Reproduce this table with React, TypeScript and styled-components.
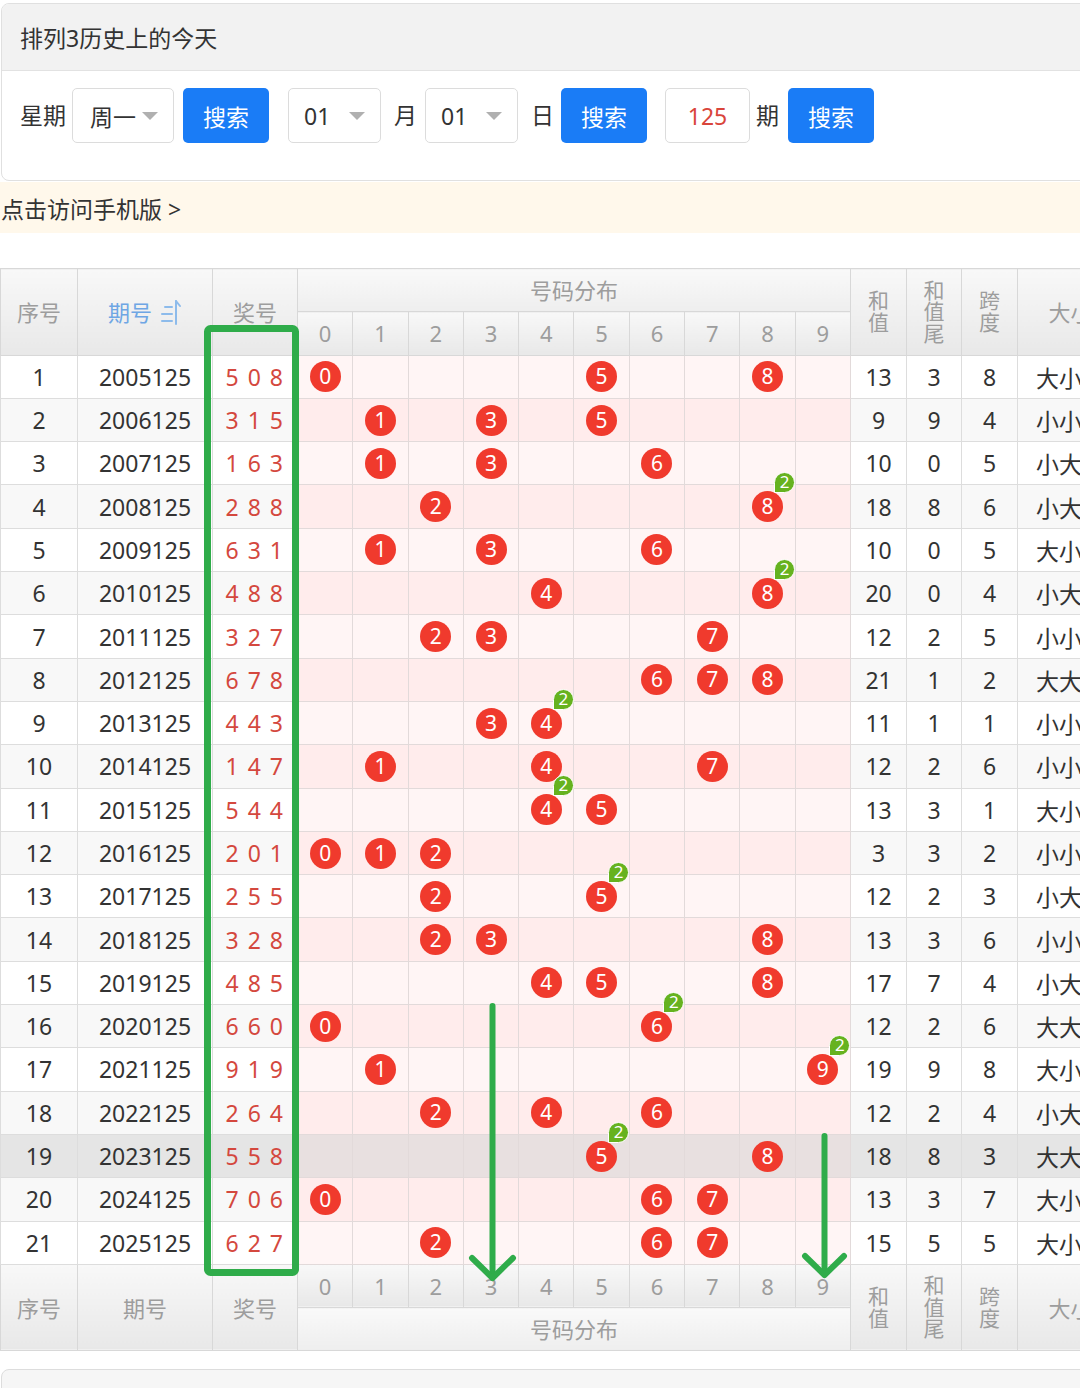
import React from "react";
import styled, { createGlobalStyle } from "styled-components";

const FONT = `"Noto Sans", "Noto Sans CJK SC", sans-serif`;

const GlobalStyle = createGlobalStyle`
  html, body { margin: 0; padding: 0; background: #fff; }
  body { overflow-x: hidden; font-family: ${FONT}; color: #333; }
`;

const Page = styled.div`
  width: 1080px;
  overflow: hidden;
  padding-top: 3px;
`;

const Card = styled.section`
  margin: 0 -30px 0 1px;
  border: 1px solid #e0e0e0;
  border-radius: 8px;
  overflow: hidden;
  background: #fff;
`;

const CardHead = styled.h1`
  margin: 0;
  height: 67px;
  box-sizing: border-box;
  display: flex;
  align-items: center;
  padding-left: 18px;
  background: #f2f2f2;
  border-bottom: 1px solid #e2e2e2;
  font-size: 23px;
  font-weight: 400;
  color: #333;
`;

const CardBody = styled.div`
  height: 109px;
  box-sizing: border-box;
  padding: 17px 0 0 18px;
  display: flex;
  align-items: flex-start;
`;

const Label = styled.span<{ $ml?: number }>`
  margin-left: ${(p) => p.$ml ?? 0}px;
  height: 55px;
  line-height: 55px;
  font-size: 23px;
  color: #333;
`;

const SelectBox = styled.div<{ $w: number; $ml: number; $pl: number }>`
  margin-left: ${(p) => p.$ml}px;
  width: ${(p) => p.$w}px;
  height: 55px;
  box-sizing: border-box;
  border: 1px solid #dcdcdc;
  border-radius: 5px;
  background: #fff;
  display: flex;
  align-items: center;
  justify-content: space-between;
  padding: 0 15px 0 ${(p) => p.$pl}px;
  font-size: 23px;
  color: #333;
`;

const Caret = styled.span`
  width: 0;
  height: 0;
  border-left: 8px solid transparent;
  border-right: 8px solid transparent;
  border-top: 8px solid #b0b0b0;
`;

const InputBox = styled.div<{ $ml: number }>`
  margin-left: ${(p) => p.$ml}px;
  width: 85px;
  height: 55px;
  box-sizing: border-box;
  border: 1px solid #dcdcdc;
  border-radius: 5px;
  display: flex;
  align-items: center;
  justify-content: center;
  font-size: 23px;
  color: #d9453b;
`;

const Button = styled.button<{ $ml: number }>`
  margin-left: ${(p) => p.$ml}px;
  width: 86px;
  height: 55px;
  border: none;
  border-radius: 5px;
  background: #1a7cf6;
  color: #fff;
  font-family: ${FONT};
  font-size: 23px;
  padding: 0;
`;

const Notice = styled.div`
  height: 51px;
  margin-top: 1px;
  background: #fff8eb;
  display: flex;
  align-items: center;
  padding-left: 1px;
  font-size: 23px;
  color: #333;
`;

const TableWrap = styled.div`
  position: relative;
  margin-top: 35px;
  overflow: hidden;
`;

const Table = styled.table`
  border-collapse: collapse;
  table-layout: fixed;
  width: 1223px;
`;

const HeadRow = styled.tr`
  height: 43.3px;
`;

const BodyRow = styled.tr`
  height: 43.3px;
`;

const Th = styled.th<{ $link?: boolean; $light?: boolean }>`
  border: 1px solid #d8d8d8;
  background: ${(p) =>
    p.$light ? "linear-gradient(#f9f9f9, #eeeeee)" : "linear-gradient(#f8f8f8, #e8e8e8)"};
  color: ${(p) => (p.$link ? "#6ea6e4" : "#9d9d9d")};
  font-weight: 400;
  font-size: 22px;
  line-height: 22px;
  padding: 0;
  white-space: nowrap;
`;

const Stacked = styled.span`
  display: inline-block;
  width: 1em;
  white-space: normal;
  word-break: break-all;
  font-size: 21px;
  line-height: 21.5px;
`;

type Tone = "plain" | "alt" | "hl";

const infoBg: Record<Tone, string> = { plain: "#ffffff", alt: "#f8f8f8", hl: "#e5e5e5" };
const distBg: Record<Tone, string> = { plain: "#fff5f5", alt: "#ffecec", hl: "#e8e0e0" };

const InfoCell = styled.td<{ $tone: Tone; $red?: boolean }>`
  border: 1px solid #dddddd;
  background: ${(p) => infoBg[p.$tone]};
  color: ${(p) => (p.$red ? "#d4483e" : "#333")};
  letter-spacing: ${(p) => (p.$red ? "1.5px" : "0")};
  font-size: 23px;
  text-align: center;
  padding: 0;
  white-space: nowrap;
`;

const DistCell = styled.td<{ $tone: Tone }>`
  border: 1px solid #e2dada;
  background: ${(p) => distBg[p.$tone]};
  text-align: center;
  padding: 0;
`;

const Ball = styled.span`
  position: relative;
  display: inline-flex;
  align-items: center;
  justify-content: center;
  width: 31px;
  height: 31px;
  border-radius: 50%;
  background: #f03a2d;
  color: #fff;
  font-size: 21px;
  line-height: 1;
  vertical-align: middle;
`;

const Badge = styled.span`
  position: absolute;
  left: 22px;
  top: -19px;
  width: 21px;
  height: 21px;
  box-sizing: border-box;
  border: 1.5px solid #fff;
  border-radius: 50% 50% 50% 0;
  background: #66b21f;
  color: #fff;
  font-size: 17px;
  line-height: 18px;
  text-align: center;
`;

const Overlay = styled.svg`
  position: absolute;
  left: 0;
  top: 0;
  width: 1080px;
  height: 1100px;
  overflow: visible;
  pointer-events: none;
`;

const BottomCard = styled.section`
  margin: 18px -30px 0 1px;
  height: 60px;
  border: 1px solid #dddddd;
  border-radius: 8px;
  background: #f6f6f6;
`;

const SortIcon = () => (
  <svg width="22" height="28" viewBox="0 0 22 28" style={{ verticalAlign: "-5px", marginLeft: 8 }}>
    <g stroke="#8dbbeb" strokeWidth="2" fill="none" strokeLinecap="round">
      <line x1="5" y1="9" x2="12" y2="9" />
      <line x1="2" y1="16" x2="12" y2="16" />
      <line x1="2" y1="23" x2="12" y2="23" />
      <line x1="16" y1="3" x2="16" y2="26" />
      <line x1="16" y1="3" x2="20" y2="8" />
    </g>
  </svg>
);

const raw = [
  "508", "315", "163", "288", "631", "488", "327", "678", "443", "147", "544",
  "201", "255", "328", "485", "660", "919", "264", "558", "706", "627",
];

const rows = raw.map((d, i) => ({
  no: i + 1,
  issue: `${2005 + i}125`,
  digits: d.split("").map(Number),
}));

const cols = [77, 135, 85, ...Array(10).fill(55.3), 56, 55, 56, 106, 100];
const DIGITS = [0, 1, 2, 3, 4, 5, 6, 7, 8, 9];

export default function App() {
  return (
    <>
      <GlobalStyle />
      <Page>
        <Card>
          <CardHead>排列3历史上的今天</CardHead>
          <CardBody>
            <Label>星期</Label>
            <SelectBox $w={102} $ml={6} $pl={17}>
              周一
              <Caret />
            </SelectBox>
            <Button $ml={9}>搜索</Button>
            <SelectBox $w={93} $ml={19} $pl={15}>
              01
              <Caret />
            </SelectBox>
            <Label $ml={13}>月</Label>
            <SelectBox $w={93} $ml={8} $pl={15}>
              01
              <Caret />
            </SelectBox>
            <Label $ml={13}>日</Label>
            <Button $ml={7}>搜索</Button>
            <InputBox $ml={18}>125</InputBox>
            <Label $ml={6}>期</Label>
            <Button $ml={9}>搜索</Button>
          </CardBody>
        </Card>
        <Notice>点击访问手机版 &gt;</Notice>

        <TableWrap>
          <Table>
            <colgroup>
              {cols.map((w, i) => (
                <col key={i} style={{ width: w }} />
              ))}
            </colgroup>
            <thead>
              <HeadRow>
                <Th rowSpan={2}>序号</Th>
                <Th rowSpan={2} $link>
                  期号
                  <SortIcon />
                </Th>
                <Th rowSpan={2}>奖号</Th>
                <Th colSpan={10} $light>号码分布</Th>
                <Th rowSpan={2}><Stacked>和值</Stacked></Th>
                <Th rowSpan={2}><Stacked>和值尾</Stacked></Th>
                <Th rowSpan={2}><Stacked>跨度</Stacked></Th>
                <Th rowSpan={2}>大小</Th>
                <Th rowSpan={2}>奇偶</Th>
              </HeadRow>
              <HeadRow>
                {DIGITS.map((d) => (
                  <Th key={d}>{d}</Th>
                ))}
              </HeadRow>
            </thead>
            <tbody>
              {rows.map((r) => {
                const tone: Tone = r.no === 19 ? "hl" : r.no % 2 === 0 ? "alt" : "plain";
                const sum = r.digits.reduce((a, b) => a + b, 0);
                const span = Math.max(...r.digits) - Math.min(...r.digits);
                const size = r.digits.map((d) => (d >= 5 ? "大" : "小")).join("");
                const odd = r.digits.map((d) => (d % 2 ? "奇" : "偶")).join("");
                return (
                  <BodyRow key={r.no}>
                    <InfoCell $tone={tone}>{r.no}</InfoCell>
                    <InfoCell $tone={tone}>{r.issue}</InfoCell>
                    <InfoCell $tone={tone} $red>
                      {r.digits.join(" ")}
                    </InfoCell>
                    {DIGITS.map((c) => {
                      const n = r.digits.filter((x) => x === c).length;
                      return (
                        <DistCell key={c} $tone={tone}>
                          {n > 0 && (
                            <Ball>
                              {c}
                              {n > 1 && <Badge>{n}</Badge>}
                            </Ball>
                          )}
                        </DistCell>
                      );
                    })}
                    <InfoCell $tone={tone}>{sum}</InfoCell>
                    <InfoCell $tone={tone}>{sum % 10}</InfoCell>
                    <InfoCell $tone={tone}>{span}</InfoCell>
                    <InfoCell $tone={tone}>{size}</InfoCell>
                    <InfoCell $tone={tone}>{odd}</InfoCell>
                  </BodyRow>
                );
              })}
            </tbody>
            <tfoot>
              <HeadRow>
                <Th rowSpan={2}>序号</Th>
                <Th rowSpan={2}>期号</Th>
                <Th rowSpan={2}>奖号</Th>
                {DIGITS.map((d) => (
                  <Th key={d}>{d}</Th>
                ))}
                <Th rowSpan={2}><Stacked>和值</Stacked></Th>
                <Th rowSpan={2}><Stacked>和值尾</Stacked></Th>
                <Th rowSpan={2}><Stacked>跨度</Stacked></Th>
                <Th rowSpan={2}>大小</Th>
                <Th rowSpan={2}>奇偶</Th>
              </HeadRow>
              <HeadRow>
                <Th colSpan={10} $light>号码分布</Th>
              </HeadRow>
            </tfoot>
          </Table>
          <Overlay>
            <g stroke="#2fac4a" fill="none" strokeWidth="7" strokeLinecap="round" strokeLinejoin="round">
              <rect x="207.5" y="60.5" width="88" height="944" rx="3" strokeLinecap="butt" />
              <line x1="492.5" y1="738" x2="492.5" y2="1008" strokeWidth="6" />
              <polyline points="472,990 492.5,1010 513,990" strokeWidth="6" />
              <line x1="824.5" y1="868" x2="824.5" y2="1005" strokeWidth="6" />
              <polyline points="805,988 824.5,1007 844,988" strokeWidth="6" />
            </g>
          </Overlay>
        </TableWrap>
        <BottomCard />
      </Page>
    </>
  );
}
